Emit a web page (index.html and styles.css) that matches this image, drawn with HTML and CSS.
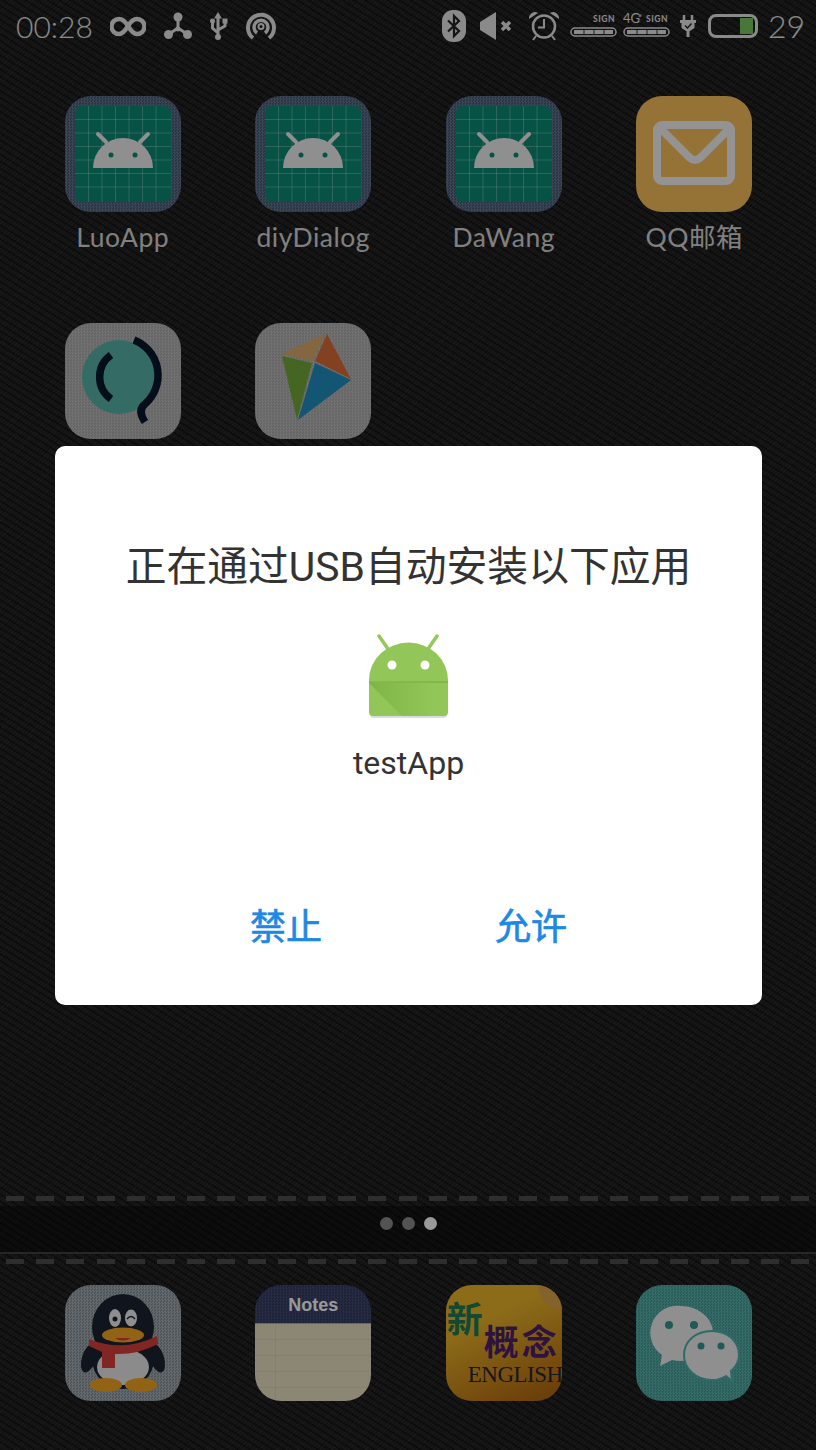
FILE: index.html
```html
<!doctype html>
<html>
<head>
  <meta content="text/html;charset=utf-8" http-equiv="Content-Type">
  <title>USB install</title>
  <link rel="stylesheet" href="styles.css">
</head>
<body>
  <svg class="defs" width="0" height="0">
    <symbol id="robot" viewBox="0 0 116 116">
      <rect x="10" y="10" width="96" height="96" rx="7" fill="#0a8a74"/>
      <path d="M10 23.500H106M10 37H106M10 50.500H106M10 64H106M10 77.500H106M10 91H106M23.500 10V106M37 10V106M50.500 10V106M64 10V106M77.500 10V106M91 10V106" stroke="#fff" stroke-opacity=".28" stroke-width="1" fill="none"/>
      <path d="M33 38l8 8M83 38l-8 8" stroke="#eee" stroke-width="4" stroke-linecap="round"/>
      <path d="M28 72a30 30 0 0 1 60 0z" fill="#eee"/>
      <circle cx="46" cy="59" r="2.500" fill="#0a8a74"/>
      <circle cx="70" cy="59" r="2.500" fill="#0a8a74"/>
    </symbol>
    <linearGradient id="fold" x1="0" y1="0" x2="1" y2="0">
      <stop offset="0" stop-color="#6fa53a" stop-opacity=".55"/>
      <stop offset="1" stop-color="#6fa53a" stop-opacity="0"/>
    </linearGradient>
  </svg>

  <div class="home">
    <div class="statusbar">
      <div class="status-left">
        <span class="clock">00:28</span>
        <svg class="st-inf" viewBox="0 0 36 24"><path d="M18 12C15 7 12 5 9 5a7.500 7.500 0 0 0 0 15c3 0 6-3 9-8s6-7 9-7a7.500 7.500 0 0 1 0 15c-3 0-6-3-9-8z" fill="none" stroke="#e6e6e6" stroke-width="4.500"/></svg>
        <svg class="st-nodes" viewBox="0 0 28 28"><path d="M14 6V16M14 16L5 22M14 16L23 22" stroke="#e6e6e6" stroke-width="3"/><circle cx="14" cy="5" r="4.500" fill="#e6e6e6"/><circle cx="4.500" cy="22.500" r="4.500" fill="#e6e6e6"/><circle cx="23.500" cy="22.500" r="4.500" fill="#e6e6e6"/><circle cx="14" cy="17" r="2.500" fill="#e6e6e6"/></svg>
        <svg class="st-usb" viewBox="0 0 18 28"><path d="M8 4V25M8 21L2.500 16V10M8 18L15 14V10" fill="none" stroke="#e6e6e6" stroke-width="3"/><path d="M8 0L4 6.500h8z" fill="#e6e6e6"/><circle cx="8" cy="25" r="3" fill="#e6e6e6"/><circle cx="2.500" cy="9" r="2.500" fill="#e6e6e6"/><rect x="12.500" y="6.500" width="5" height="5" fill="#e6e6e6"/></svg>
        <svg class="st-hotspot" viewBox="0 0 30 30"><path d="M7 27A13 13 0 1 1 23 27" fill="none" stroke="#e6e6e6" stroke-width="4"/><path d="M11 22A7 7 0 1 1 19 22" fill="none" stroke="#e6e6e6" stroke-width="3.500"/><circle cx="15" cy="15.500" r="2.500" fill="none" stroke="#e6e6e6" stroke-width="2"/></svg>
      </div>
      <div class="status-right">
        <svg class="st-bt" viewBox="0 0 24 32"><rect width="24" height="32" rx="11" fill="#e6e6e6"/><path d="M6 10.500L17 21L12 26V6L17 11L6 21.500" fill="none" stroke="#222" stroke-width="2.200"/></svg>
        <svg class="st-mute" viewBox="0 0 32 28"><path d="M0 10L16 0V28L0 18z" fill="#e6e6e6"/><path d="M22 10l8 8M30 10l-8 8" stroke="#e6e6e6" stroke-width="3.500"/></svg>
        <svg class="st-alarm" viewBox="0 0 30 30"><circle cx="15" cy="15.500" r="11" fill="none" stroke="#e6e6e6" stroke-width="2.500"/><path d="M15 8V16.500H9" fill="none" stroke="#e6e6e6" stroke-width="2"/><path d="M0 8A6 6 0 0 1 9 2zM30 8A6 6 0 0 0 21 2z" fill="#e6e6e6"/><path d="M7 25L4 29M23 25L26 29" stroke="#e6e6e6" stroke-width="2"/></svg>
        <svg class="st-sign" viewBox="0 -6 47 32"><text class="sign-text" x="45" y="10" text-anchor="end">SIGN</text><rect x="1" y="16" width="45" height="8" rx="4" fill="none" stroke="#e6e6e6" stroke-width="1.500"/><path d="M4 20H43" stroke="#e6e6e6" stroke-width="4"/><path d="M14 18V22M24 18V22M34 18V22" stroke="#333" stroke-width="1"/></svg>
        <svg class="st-sign st-sign2" viewBox="0 -6 47 32"><text class="sign-text" x="45" y="10" text-anchor="end">SIGN</text><text class="sign-net" x="0" y="11">4G</text><text class="sign-star" x="15" y="9">*</text><rect x="1" y="16" width="45" height="8" rx="4" fill="none" stroke="#e6e6e6" stroke-width="1.500"/><path d="M4 20H43" stroke="#e6e6e6" stroke-width="4"/><path d="M14 18V22M24 18V22M34 18V22" stroke="#333" stroke-width="1"/></svg>
        <svg class="st-plug" viewBox="0 0 16 22"><path d="M4 0V6M12 0V6" stroke="#e6e6e6" stroke-width="2.500"/><path d="M0 5H16V8H14.500V13L10 16H9.500V22H6.500V16H6L1.500 13V8H0z" fill="#e6e6e6"/><path d="M5 10.500L7.500 13L11.500 8.500" fill="none" stroke="#222" stroke-width="1.400"/></svg>
        <div class="battery"><div class="battery-level"></div></div>
        <span class="percent">29</span>
      </div>
    </div>

    <div class="desktop">
      <div class="app"><svg class="tile tile-denim" viewBox="0 0 116 116"><use href="#robot"/></svg><span class="app-name">LuoApp</span></div>
      <div class="app"><svg class="tile tile-denim" viewBox="0 0 116 116"><use href="#robot"/></svg><span class="app-name">diyDialog</span></div>
      <div class="app"><svg class="tile tile-denim" viewBox="0 0 116 116"><use href="#robot"/></svg><span class="app-name">DaWang</span></div>
      <div class="app">
        <svg class="tile tile-mail" viewBox="0 0 116 116"><rect x="21" y="29" width="74" height="56" rx="5" fill="none" stroke="#f5f5f5" stroke-width="8"/><path d="M24 32L54 62Q59 66 64 62L94 32" fill="none" stroke="#f5f5f5" stroke-width="8"/></svg>
        <span class="app-name">QQ邮箱</span>
      </div>
      <div class="app">
        <svg class="tile tile-light" viewBox="0 0 116 116"><circle cx="54" cy="54" r="37" fill="#58b5a8"/><path d="M69 17A38 38 0 0 1 80 81Q72 87 80 99" fill="none" stroke="#05182c" stroke-width="7.500"/><path d="M46 32A27 27 0 0 0 46 76" fill="none" stroke="#05182c" stroke-width="7.500"/></svg>
      </div>
      <div class="app">
        <svg class="tile tile-light" viewBox="0 0 116 116"><path d="M27 31L70 11L58 38z" fill="#dcab6c"/><path d="M72 11L96 56L60 38z" fill="#dc6d38"/><path d="M27 33L57 40L42 97z" fill="#74aa3a"/><path d="M60 40L96 57L43 97z" fill="#1f90c0"/></svg>
      </div>
    </div>

    <div class="seam">
      <div class="stitches"></div>
      <div class="pager"><span class="dot"></span><span class="dot"></span><span class="dot dot-on"></span></div>
      <div class="stitches stitches-low"></div>
    </div>

    <div class="dock">
      <svg class="tile tile-qq" viewBox="0 0 116 116">
        <ellipse cx="24" cy="73" rx="7" ry="15" fill="#1c2230" transform="rotate(18 24 73)"/>
        <ellipse cx="92" cy="73" rx="7" ry="15" fill="#1c2230" transform="rotate(-18 92 73)"/>
        <ellipse cx="58" cy="42" rx="31" ry="33" fill="#1c2230"/>
        <ellipse cx="58" cy="74" rx="31" ry="30" fill="#1c2230"/>
        <ellipse cx="58" cy="82" rx="26" ry="18" fill="#e8e8e8"/>
        <ellipse cx="50" cy="33" rx="6" ry="9" fill="#eee"/><ellipse cx="66" cy="33" rx="6" ry="8.500" fill="#eee"/>
        <circle cx="50" cy="34" r="2.500" fill="#1c2230"/><path d="M62 34Q66 29 70 34" fill="none" stroke="#1c2230" stroke-width="1.500"/>
        <path d="M24 54Q58 68 92 51L93 59Q72 70 50 69V83H37V67L24 61z" fill="#d8403a"/>
        <ellipse cx="58" cy="50" rx="21" ry="7.500" fill="#f3a522"/><path d="M50 53Q58 58 66 53z" fill="#d8403a"/>
        <ellipse cx="41" cy="100" rx="16" ry="7" fill="#f3a522"/><ellipse cx="76" cy="100" rx="16" ry="7" fill="#f3a522"/>
      </svg>
      <div class="tile tile-notes"><div class="notes-head">Notes</div><div class="notes-paper"></div></div>
      <div class="tile tile-english">
        <span class="eng-corner"></span>
        <span class="eng-xin">新</span>
        <span class="eng-gai">概念</span>
        <span class="eng-word">ENGLISH</span>
      </div>
      <svg class="tile tile-wechat" viewBox="0 0 116 116">
        <path d="M24 81L26 70A27 27 0 0 1 45 21C62 21 77 33 77 48S62 76 45 76Q40 76 36 75z" fill="#eee"/>
        <path d="M96 96L90 91Q83 95 76 95C60 95 48 84 48 70S60 46 76 46S103 57 103 70Q103 79 95 86z" fill="#eee" stroke="#4fb3ab" stroke-width="2"/>
        <circle cx="33" cy="40" r="4" fill="#36978f"/><circle cx="58" cy="40" r="4" fill="#36978f"/>
        <circle cx="65" cy="61" r="3.500" fill="#36978f"/><circle cx="85" cy="61" r="3.500" fill="#36978f"/>
      </svg>
    </div>
  </div>

  <div class="scrim"></div>

  <div class="dialog">
    <h1 class="dialog-title">正在通过USB自动安装以下应用</h1>
    <svg class="pkg-icon" viewBox="0 0 90 90">
      <path d="M15 6L24 19M73 6L64 19" stroke="#93c95a" stroke-width="3.500" stroke-linecap="round"/>
      <path d="M6 53H83V84Q83 88 79 88H10Q6 88 6 84z" fill="#c4c4c4" opacity=".6"/>
      <path d="M5 52V50A39 37 0 0 1 84 50V82Q84 86 80 86H9Q5 86 5 82z" fill="#92c658"/>
      <path d="M5 51H84V53H5z" fill="#84b84c"/>
      <path d="M5 53H70V86H38z" fill="url(#fold)"/>
      <circle cx="28" cy="35" r="4.500" fill="#fff"/>
      <circle cx="61" cy="35" r="4.500" fill="#fff"/>
    </svg>
    <div class="pkg-name">testApp</div>
    <div class="dialog-buttons">
      <button class="dialog-btn">禁止</button>
      <button class="dialog-btn">允许</button>
    </div>
  </div>
</body>
</html>
```

FILE: styles.css
```css
* { box-sizing: border-box; }
html, body { margin: 0; padding: 0; }
body {
  position: relative;
  width: 816px; height: 1450px;
  overflow: hidden;
  font-family: Lato, "Noto Sans CJK SC", sans-serif;
  background-color: #202020;
  background-image:
    repeating-linear-gradient(32deg, rgba(0,0,0,0.35) 0 2px, transparent 2px 6px),
    repeating-linear-gradient(-45deg, rgba(255,255,255,0.04) 0 1px, transparent 1px 3px);
}
.defs { position: absolute; }
.home {
  height: 1450px;
  display: flex; flex-direction: column;
}

/* status bar */
.statusbar {
  height: 52px;
  display: flex; align-items: center; justify-content: space-between;
  padding: 0 14px 0 16px;
  color: #e6e6e6;
}
.status-left, .status-right { display: flex; align-items: center; }
.status-left { gap: 18px; }
.clock { width: 76px; font-size: 30px; line-height: 50px; font-weight: 300; white-space: nowrap; }
.percent { width: 34px; margin-left: 10px; font-size: 32px; line-height: 50px; font-weight: 300; }
.st-inf { width: 36px; height: 24px; }
.st-nodes { width: 28px; height: 28px; }
.st-usb { width: 18px; height: 28px; }
.st-hotspot { width: 30px; height: 30px; }
.st-bt { width: 24px; height: 32px; }
.st-mute { width: 32px; height: 28px; margin-left: 14px; }
.st-alarm { width: 30px; height: 30px; margin-left: 17px; }
.st-sign { width: 47px; height: 32px; margin-left: 11px; margin-top: -8px; }
.st-sign2 { margin-left: 6px; }
.st-plug { width: 16px; height: 22px; margin-left: 10px; }
.sign-text { font: 700 8.500px Lato, sans-serif; fill: #e6e6e6; letter-spacing: 0.5px; }
.sign-net { font: 400 13px Lato, sans-serif; fill: #e6e6e6; }
.sign-star { font: 700 9px Lato, sans-serif; fill: #e6e6e6; }
.battery {
  width: 50px; height: 24px; margin-left: 12px;
  display: flex; justify-content: flex-end;
  padding: 1px 2px;
  border: 3px solid #e6e6e6; border-radius: 8px;
}
.battery-level { width: 13px; background: #79c95e; }

/* icons */
.desktop {
  flex: 1;
  display: grid;
  grid-template-columns: repeat(4, 190.5px);
  grid-auto-rows: 227px;
  padding: 44px 27px 0 27.5px;
}
.app { display: flex; flex-direction: column; align-items: center; }
.app-name {
  margin-top: 6px;
  font-size: 26.5px; line-height: 38px;
  letter-spacing: 0.5px;
  color: #d6d6d6;
}
.tile {
  display: block; flex: none;
  width: 116px; height: 116px;
  border-radius: 26px;
  overflow: hidden;
}
.tile-denim {
  background: repeating-conic-gradient(#62768e 0 25%, #475970 0 50%) 0 0 / 3px 3px;
}
.tile-mail { background: #f8c05a; }
.tile-light {
  background: repeating-conic-gradient(#bcbcbc 0 25%, #a8a8a8 0 50%) 0 0 / 3px 3px;
}
.tile-qq {
  background: repeating-conic-gradient(#a6b0b5 0 25%, #848e94 0 50%) 0 0 / 3px 3px;
}
.tile-wechat {
  background: repeating-conic-gradient(#5ab5ad 0 25%, #469c95 0 50%) 0 0 / 3px 3px;
}
.tile-notes { display: flex; flex-direction: column; }
.notes-head {
  height: 38px;
  background: repeating-conic-gradient(#414a72 0 25%, #2f3759 0 50%) 0 0 / 3px 3px;
  color: #fff;
  font: 700 18px/41px "Liberation Sans", sans-serif;
  text-align: center;
}
.notes-paper {
  flex: 1;
  border-top: 1px solid #d9a36c;
  background-color: #e9dfc4;
  background-image:
    linear-gradient(90deg, transparent 20px, rgba(210,150,110,0.2) 20px 21px, transparent 21px),
    repeating-linear-gradient(180deg, transparent 0 15px, rgba(170,150,120,0.15) 15px 16px);
}
.tile-english {
  position: relative;
  background: linear-gradient(155deg, #e9b52b 30%, #c9851a 70%, #ab6110);
}
.eng-corner {
  position: absolute; top: -24px; right: -24px;
  width: 48px; height: 48px;
  border-radius: 50%;
  background: #dba548;
}
.eng-xin, .eng-gai, .eng-word { position: absolute; white-space: nowrap; }
.eng-xin {
  left: 1px; top: 13px;
  font: 700 36px/38px "Noto Sans CJK SC", sans-serif;
  color: #1f7a55;
}
.eng-gai {
  left: 38px; top: 36px;
  font: 700 35px/38px "Noto Sans CJK SC", sans-serif;
  letter-spacing: 3px;
  color: #4d1f6b;
}
.eng-word {
  left: 22px; top: 76px;
  font: 400 23px/28px "Liberation Serif", serif;
  letter-spacing: -0.5px;
  color: #262638;
}

/* seam with pager */
.seam {
  height: 78px;
  display: flex; flex-direction: column;
}
.stitches {
  height: 14px; flex: none;
  background-image: repeating-linear-gradient(90deg, #4d4d4d 0 18px, transparent 18px 30.2px);
  background-size: 100% 5px;
  background-position: 6px 4px;
  background-repeat: no-repeat;
}
.stitches-low {
  height: 18px;
  border-top: 2px solid #404040;
  background-position: 6px 5px;
}
.pager {
  flex: 1;
  display: flex; align-items: center; justify-content: center; gap: 9px;
  padding-bottom: 12px;
  background: rgba(0,0,0,0.4);
}
.dot { width: 13px; height: 13px; border-radius: 50%; background: #8a8a8a; }
.dot-on { background: #fff; }
.dock {
  display: grid;
  grid-template-columns: repeat(4, 190.5px);
  justify-items: center;
  padding: 15px 27px 49px 27.5px;
}

/* dialog */
.scrim {
  position: absolute; top: 0; left: 0; right: 0; bottom: 0;
  background: rgba(0,0,0,0.4);
}
.dialog {
  position: absolute; top: 446px; left: 55px;
  width: 707px; height: 559px;
  display: flex; flex-direction: column; align-items: center;
  background: #fff;
  border-radius: 10px;
  font-family: Roboto, "Noto Sans CJK SC", sans-serif;
}
.dialog-title {
  margin: 93px 0 0;
  font-size: 40.8px; line-height: 56px; font-weight: 400;
  color: #333;
  white-space: nowrap;
}
.pkg-icon { width: 90px; height: 90px; margin-top: 35px; flex: none; }
.pkg-name { margin-top: 20px; font-size: 32px; line-height: 46px; color: #333; }
.dialog-buttons { display: flex; margin-top: 116px; }
.dialog-btn {
  width: 245px; height: 52px;
  padding: 0; border: none; background: none;
  font-family: inherit;
  font-size: 36px; line-height: 52px; font-weight: 400;
  -webkit-text-stroke: 0.7px #1e88e5;
  color: #1e88e5;
}
```
